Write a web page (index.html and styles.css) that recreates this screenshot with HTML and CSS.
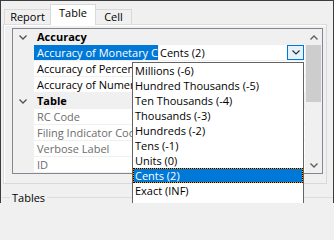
FILE: index.html
```html
<!DOCTYPE html>
<html>
<head>
<meta charset="utf-8">
<link rel="stylesheet" href="styles.css">
</head>
<body>
<div class="window">
  <div class="tabs">
    <div class="tab tab-report">Report</div>
    <div class="tab tab-table active">Table</div>
    <div class="tab tab-cell">Cell</div>
  </div>
  <div class="panel">
    <div class="grid">
      <div class="rows">
        <div class="cat">
          <span class="gutter"><svg width="8" height="5" viewBox="0 0 8 5"><polyline points="0.5,0.5 4,4 7.5,0.5" fill="none" stroke="#505050" stroke-width="1.3"/></svg></span>
          <span class="cat-name">Accuracy</span>
        </div>
        <div class="prop">
          <span class="gutter"></span>
          <span class="name selected">Accuracy of Monetary Cells</span>
          <span class="value">
            <span class="value-text">Cents (2)</span>
            <span class="dd-btn"><svg width="8" height="5" viewBox="0 0 8 5"><polyline points="0.5,0.5 4,4 7.5,0.5" fill="none" stroke="#303030" stroke-width="1.2"/></svg></span>
          </span>
        </div>
        <div class="prop">
          <span class="gutter"></span>
          <span class="name">Accuracy of Percentage Cells</span>
          <span class="value"></span>
        </div>
        <div class="prop">
          <span class="gutter"></span>
          <span class="name">Accuracy of Numeric Cells</span>
          <span class="value"></span>
        </div>
        <div class="cat">
          <span class="gutter"><svg width="8" height="5" viewBox="0 0 8 5"><polyline points="0.5,0.5 4,4 7.5,0.5" fill="none" stroke="#505050" stroke-width="1.3"/></svg></span>
          <span class="cat-name">Table</span>
        </div>
        <div class="prop">
          <span class="gutter"></span>
          <span class="name ro">RC Code</span>
          <span class="value"></span>
        </div>
        <div class="prop">
          <span class="gutter"></span>
          <span class="name ro">Filing Indicator Code</span>
          <span class="value"></span>
        </div>
        <div class="prop">
          <span class="gutter"></span>
          <span class="name ro">Verbose Label</span>
          <span class="value"></span>
        </div>
        <div class="prop">
          <span class="gutter"></span>
          <span class="name ro">ID</span>
          <span class="value"></span>
        </div>
      </div>
      <div class="vscroll">
        <span class="sb-arrow"><svg width="8" height="5" viewBox="0 0 8 5"><polyline points="0.5,4.5 4,1 7.5,4.5" fill="none" stroke="#606060" stroke-width="1.4"/></svg></span>
        <span class="sb-thumb"></span>
        <span class="sb-track"></span>
        <span class="sb-arrow"><svg width="8" height="5" viewBox="0 0 8 5"><polyline points="0.5,0.5 4,4 7.5,0.5" fill="none" stroke="#606060" stroke-width="1.4"/></svg></span>
      </div>
    </div>
  </div>
  <div class="group">
    <span class="group-label">Tables</span>
  </div>

  <div class="dropdown">
    <div class="item">Millions (-6)</div>
    <div class="item">Hundred Thousands (-5)</div>
    <div class="item">Ten Thousands (-4)</div>
    <div class="item">Thousands (-3)</div>
    <div class="item">Hundreds (-2)</div>
    <div class="item">Tens (-1)</div>
    <div class="item">Units (0)</div>
    <div class="item focused">Cents (2)</div>
    <div class="item">Exact (INF)</div>
  </div>
</div>
</body>
</html>
```

FILE: styles.css
```css
html, body {
  margin: 0;
  padding: 0;
  width: 334px;
  height: 203px;
  overflow: hidden;
  background: #f0f0f0;
}
body {
  font-family: "Open Sans", "Noto Sans", sans-serif;
  font-size: 11px;
  color: #000;
}
.window {
  position: relative;
  width: 334px;
  height: 203px;
  overflow: hidden;
  box-sizing: border-box;
  border: 1px solid #3c3c3c;
  border-bottom: none;
  background: #f0f0f0;
}

/* tabs */
.tabs {
  display: flex;
  align-items: flex-end;
  height: 23px;
  padding-left: 3px;
  position: relative;
  z-index: 2;
}
.tab {
  box-sizing: border-box;
  height: 15px;
  border: 1px solid #d9d9d9;
  border-bottom: none;
  background: #f0f0f0;
  line-height: 13px;
  text-align: center;
}
.tab-report { width: 46px; border-right: none; }
.tab-cell { width: 36px; border-left: none; }
.tab-table { width: 46px; }
.tab.active {
  height: 21px;
  margin-bottom: -1px;
  background: #fff;
  line-height: 16px;
  padding-bottom: 3px;
}

/* tab panel */
.panel {
  box-sizing: border-box;
  width: 324px;
  height: 160px;
  margin-left: 2px;
  border: 1px solid #d9d9d9;
  border-top-color: #dcdcdc;
  background: #f0f0f0;
  padding: 3px 0 0 8px;
  box-shadow: inset 1px 1px 0 #fff;
}
.grid {
  box-sizing: border-box;
  width: 311px;
  height: 146px;
  border: 1px solid #828790;
  display: flex;
  background: #f0f0f0;
}
.rows {
  width: 292px;
  display: flex;
  flex-direction: column;
}
.cat, .prop {
  display: flex;
  height: 16px;
  line-height: 16px;
}
.gutter {
  width: 21px;
  flex: none;
  display: flex;
  align-items: center;
  justify-content: center;
  padding-right: 2px;
  box-sizing: border-box;
}
.cat-name {
  font-weight: bold;
  padding-left: 3px;
}
.name {
  width: 125px;
  flex: none;
  box-sizing: border-box;
  padding-left: 3px;
  background: #fff;
  border-right: 1px solid #f0f0f0;
  border-bottom: 1px solid #f0f0f0;
  white-space: nowrap;
  overflow: hidden;
  line-height: 15px;
}
.name.selected {
  background: #0078d7;
  color: #fff;
}
.name.ro { color: #6d6d6d; }
.value {
  flex: 1;
  display: flex;
  align-items: center;
  background: #fff;
  border-bottom: 1px solid #f0f0f0;
  box-sizing: border-box;
  line-height: 15px;
  padding-left: 1px;
}
.value-text { flex: 1; }
.dd-btn {
  box-sizing: border-box;
  width: 17px;
  height: 15px;
  margin-right: 1px;
  border: 1px solid #0078d7;
  background: #e5f1fb;
  display: flex;
  align-items: center;
  justify-content: center;
  align-self: flex-start;
}

/* scrollbar */
.vscroll {
  width: 17px;
  display: flex;
  flex-direction: column;
  background: #f0f0f0;
}
.sb-arrow {
  height: 16px;
  display: flex;
  align-items: center;
  justify-content: center;
  flex: none;
}
.sb-thumb {
  height: 57px;
  margin: 0 1px;
  background: #cdcdcd;
  flex: none;
}
.sb-track { flex: 1; }

/* group box */
.group {
  display: flex;
  align-items: center;
  height: 16px;
  margin-top: 5px;
  margin-left: 1px;
}
.group::before {
  content: "";
  width: 8px;
  height: 1px;
  background: #dcdcdc;
  margin-right: 2px;
}
.group::after {
  content: "";
  flex: 1;
  height: 1px;
  background: #dcdcdc;
  margin-left: 2px;
}

/* dropdown popup */
.dropdown {
  position: absolute;
  left: 131px;
  top: 61px;
  width: 172px;
  height: 160px;
  box-sizing: border-box;
  border: 1px solid #646464;
  background: #fff;
  z-index: 5;
}
.item {
  height: 15px;
  line-height: 15px;
  padding-left: 2px;
  white-space: nowrap;
  box-sizing: border-box;
}
.item.focused {
  color: #fff;
  border: 1px dotted #000;
  padding-left: 1px;
  line-height: 13px;
  background: linear-gradient(#0078d7, #0078d7) padding-box, #f7931e border-box;
}
```
